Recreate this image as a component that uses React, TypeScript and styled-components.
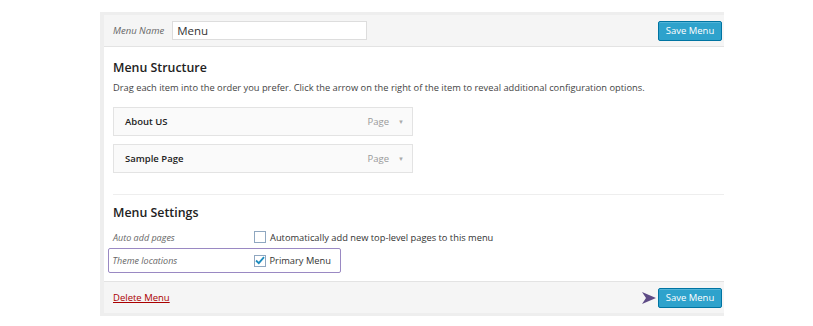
import React from 'react'
import styled, { createGlobalStyle } from 'styled-components'

const Global = createGlobalStyle`
body {
  margin: 0;
  background: #ffffff;
  font-family: "Open Sans", "Noto Sans", sans-serif;
  color: #222;
}
`

const items = ['About US', 'Sample Page']

const App = () => {
  return (
    <Page>
      <Global />
      <Frame>
        <Header>
          <NameLabel>Menu Name</NameLabel>
          <NameInput defaultValue="Menu" />
          <Spacer />
          <SaveButton>Save Menu</SaveButton>
        </Header>
        <Body>
          <Title>Menu Structure</Title>
          <Desc>Drag each item into the order you prefer. Click the arrow on the right of the item to reveal additional configuration options.</Desc>
          <ItemList>
            {items.map((it) => (
              <Item key={it}>
                <ItemTitle>{it}</ItemTitle>
                <ItemType>Page</ItemType>
                <Caret>▼</Caret>
              </Item>
            ))}
          </ItemList>
          <Divider />
          <Title>Menu Settings</Title>
          <SettingRow>
            <SettingLabel>Auto add pages</SettingLabel>
            <Check />
            <CheckText>Automatically add new top-level pages to this menu</CheckText>
          </SettingRow>
          <Highlight>
            <SettingLabel>Theme locations</SettingLabel>
            <Check>
              <svg width="10" height="9" viewBox="0 0 10 9">
                <path d="M1 4.5 L3.8 7.2 L9 1.2" fill="none" stroke="#1e8cbe" strokeWidth="1.8" />
              </svg>
            </Check>
            <CheckText>Primary Menu</CheckText>
          </Highlight>
        </Body>
        <Footer>
          <DeleteLink>Delete Menu</DeleteLink>
          <Spacer />
          <Arrow viewBox="0 0 14 12" width="14" height="12">
            <path d="M0 0 L14 6 L0 12 L4 6 Z" fill="#5e4b86" />
          </Arrow>
          <SaveButton>Save Menu</SaveButton>
        </Footer>
      </Frame>
    </Page>
  )
}

export default App

const Page = styled.div`
width: 813px;
height: 326px;
padding: 12px 0 0 100px;
box-sizing: border-box;
`

const Frame = styled.div`
width: 624px;
box-sizing: border-box;
border-left: 4px solid #eeeeee;
border-top: 3px solid #eeeeee;
border-bottom: 3px solid #eeeeee;
background: #fff;
`

const Header = styled.div`
height: 31px;
background: #f5f5f5;
border-bottom: 1px solid #e3e3e3;
display: flex;
align-items: center;
padding: 0 2px 0 9px;
`

const NameLabel = styled.span`
font-size: 9.5px;
font-style: italic;
color: #666;
margin-right: 8px;
`

const NameInput = styled.input`
width: 195px;
height: 19px;
box-sizing: border-box;
border: 1px solid #dddddd;
background: #fff;
font-family: "Open Sans", sans-serif;
font-size: 11.5px;
color: #333;
padding: 0 4px;
outline: none;
`

const Spacer = styled.div`
flex: 1;
`

const SaveButton = styled.button`
width: 64px;
height: 20px;
padding: 0;
background: #2ea2cc;
border: 1px solid #0074a2;
border-radius: 2px;
box-shadow: inset 0 1px 0 rgba(120, 200, 230, 0.5);
color: #fff;
font-family: "Open Sans", sans-serif;
font-size: 9.5px;
`

const Body = styled.div`
padding: 12px 0 8px 9px;
`

const Title = styled.div`
font-size: 12.4px;
font-weight: 600;
color: #222;
line-height: 18px;
`

const Desc = styled.div`
font-size: 9.3px;
color: #444;
margin-top: 4px;
line-height: 14px;
`

const ItemList = styled.div`
display: flex;
flex-direction: column;
gap: 8px;
margin-top: 12px;
`

const Item = styled.div`
width: 300px;
height: 29px;
box-sizing: border-box;
border: 1px solid #e3e3e3;
background: #fafafa;
display: flex;
align-items: center;
padding: 0 8px 0 11px;
`

const ItemTitle = styled.span`
flex: 1;
font-size: 9.5px;
font-weight: 600;
color: #222;
`

const ItemType = styled.span`
font-size: 9.5px;
color: #999;
`

const Caret = styled.span`
font-size: 6px;
color: #aaa;
margin-left: 9px;
`

const Divider = styled.div`
height: 1px;
background: #eeeeee;
margin: 21px 0 9px 0;
`

const SettingRow = styled.div`
display: flex;
align-items: center;
height: 22px;
margin-top: 4px;
`

const Highlight = styled(SettingRow)`
width: 233px;
height: 25px;
margin-top: 0;
box-sizing: border-box;
border: 1.5px solid #9a89c3;
border-radius: 2px;
margin-left: -5px;
padding-left: 3.5px;
`

const SettingLabel = styled.span`
width: 141px;
font-size: 9px;
font-style: italic;
color: #666;
`

const Check = styled.span`
width: 12px;
height: 12px;
box-sizing: border-box;
border: 1px solid #8fa7c0;
background: #fff;
display: flex;
align-items: center;
justify-content: center;
margin-right: 4px;
`

const CheckText = styled.span`
font-size: 9.3px;
color: #333;
`

const Footer = styled.div`
height: 31px;
background: #f5f5f5;
border-top: 1px solid #e3e3e3;
display: flex;
align-items: center;
padding: 0 2px 0 9px;
`

const DeleteLink = styled.a`
font-size: 9.5px;
color: #a00;
text-decoration: underline;
`

const Arrow = styled.svg`
margin-right: 2px;
`
